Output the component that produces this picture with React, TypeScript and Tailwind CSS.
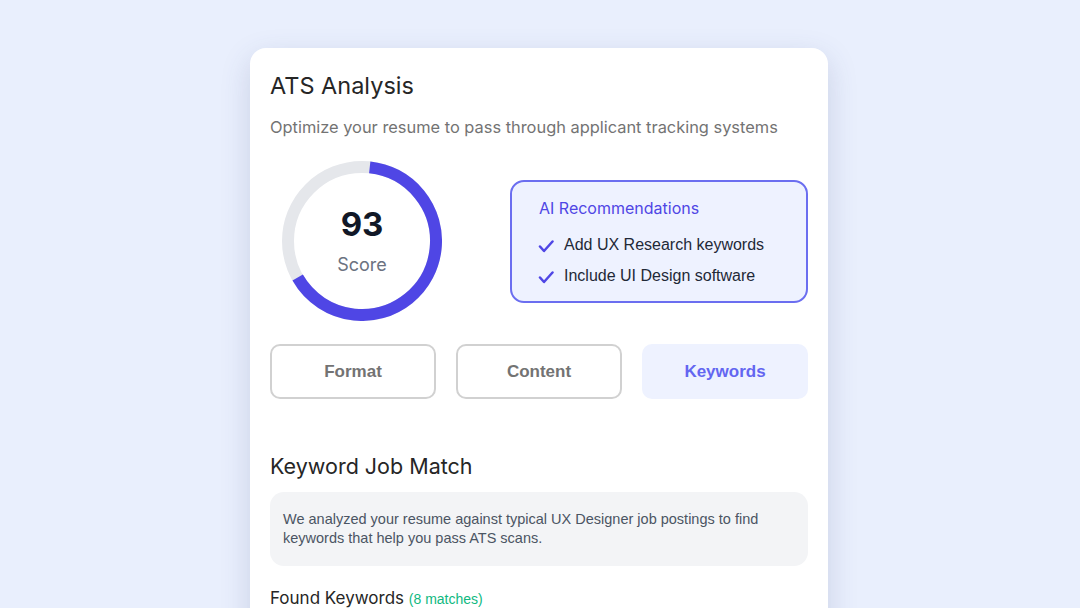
import React from 'react';

const inter = { fontFamily: 'Inter, "Noto Sans", sans-serif' };
const arial = { fontFamily: '"Liberation Sans", Arial, sans-serif' };

const Check: React.FC = () => (
  <svg width="16" height="16" viewBox="0 0 16 16" fill="none" stroke="#4f46e5" strokeWidth="2.5" strokeLinecap="round" strokeLinejoin="round">
    <path d="M2 8.5l4 4.5L14.5 3.5" />
  </svg>
);

const ScoreRing: React.FC = () => {
  const r = 74;
  const c = 2 * Math.PI * r;
  const pct = 0.65;
  return (
    <div className="relative w-[160px] h-[160px] ml-3">
      <svg width="160" height="160" viewBox="0 0 160 160">
        <circle cx="80" cy="80" r={r} fill="none" stroke="#e5e7eb" strokeWidth="12" />
        <circle
          cx="80"
          cy="80"
          r={r}
          fill="none"
          stroke="#4f46e5"
          strokeWidth="12"
          strokeDasharray={`${c * pct} ${c}`}
          transform="rotate(-84 80 80)"
        />
      </svg>
      <div className="absolute inset-0 flex flex-col items-center justify-center">
        <div className="text-[33px] font-bold text-[#111827] leading-[40px] mt-[-2px]" style={inter}>93</div>
        <div className="text-[18px] text-[#6b7280] leading-6 mt-[9px]" style={inter}>Score</div>
      </div>
    </div>
  );
};

export default function App() {
  return (
    <div className="w-[1080px] h-[608px] overflow-hidden bg-[#e9effd] pl-[250px]">
      <div className="mt-12 w-[578px] h-[600px] bg-white rounded-2xl shadow-[0_10px_30px_rgba(60,70,120,0.18)] px-5 pt-[22px]">
        <h1 className="text-[23.5px] leading-8 text-[#262626]" style={inter}>ATS Analysis</h1>
        <p className="mt-[13px] text-[16.4px] leading-6 text-[#737373]" style={inter}>
          Optimize your resume to pass through applicant tracking systems
        </p>

        <div className="mt-[22px] flex items-center justify-between">
          <ScoreRing />
          <div className="w-[298px] h-[123px] rounded-[14px] border-2 border-[#6b6ef0] bg-[#eef2ff] pl-[27px] pt-[16px]" style={arial}>
            <div className="text-[16px] leading-5 text-[#4f46e5]" style={inter}>AI Recommendations</div>
            <ul className="mt-[17px] flex flex-col gap-[11px]">
              <li className="flex items-center gap-[10px] -ml-px text-[16px] leading-5 text-[#1f2937]">
                <span className="mt-[3px]"><Check /></span>Add UX Research keywords
              </li>
              <li className="flex items-center gap-[10px] -ml-px text-[16px] leading-5 text-[#1f2937]">
                <span className="mt-[3px]"><Check /></span>Include UI Design software
              </li>
            </ul>
          </div>
        </div>

        <div className="mt-[23px] grid grid-cols-3 gap-5" style={arial}>
          <button className="h-[55px] rounded-[10px] border-2 border-[#d1d1d1] bg-white text-[17px] font-bold text-[#737373]">Format</button>
          <button className="h-[55px] rounded-[10px] border-2 border-[#d1d1d1] bg-white text-[17px] font-bold text-[#737373]">Content</button>
          <button className="h-[55px] rounded-[10px] border-2 border-transparent bg-[#eef2ff] text-[17px] font-bold text-[#6366f1]">Keywords</button>
        </div>

        <h2 className="mt-[53px] text-[21.5px] leading-7 text-[#262626]" style={inter}>Keyword Job Match</h2>
        <div className="mt-[12px] h-[74px] rounded-[14px] bg-[#f3f4f6] px-[13px] pt-[18px] text-[14.5px] leading-[19px] text-[#4b5563]" style={arial}>
          We analyzed your resume against typical UX Designer job postings to find keywords that help you pass ATS scans.
        </div>

        <div className="mt-[20px] text-[17px] leading-6 text-[#262626]" style={inter}>
          Found Keywords <span className="text-[14px] text-[#10b981]" style={arial}>(8 matches)</span>
        </div>
      </div>
    </div>
  );
}
